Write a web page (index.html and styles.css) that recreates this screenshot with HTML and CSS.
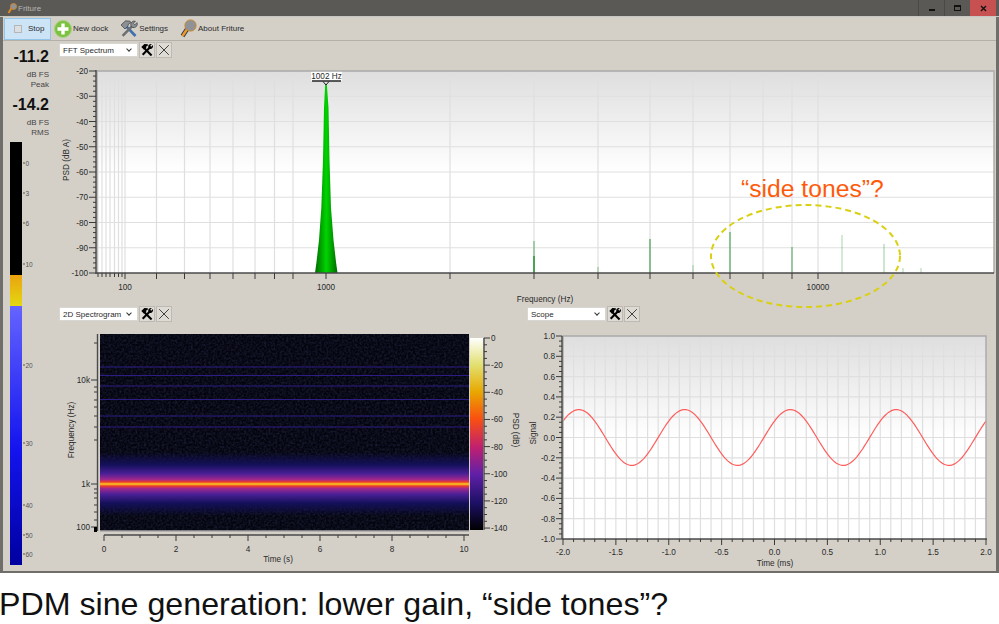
FILE: index.html
```html
<!DOCTYPE html>
<html lang="en">
<head>
    <meta charset="UTF-8">
    <title>Friture</title>
    <link rel="stylesheet" href="styles.css">
</head>
<body>
    <svg class="defs" width="0" height="0">
        <defs>
            <linearGradient id="plotShade" x1="0" y1="0" x2="0" y2="1">
                <stop offset="0" stop-color="#dedede"/>
                <stop offset="0.5" stop-color="#ffffff"/>
            </linearGradient>
            <linearGradient id="peakGreen" x1="0" y1="0" x2="1" y2="0">
                <stop offset="0" stop-color="#006a00"/>
                <stop offset="0.5" stop-color="#00d400"/>
                <stop offset="1" stop-color="#006a00"/>
            </linearGradient>
            <linearGradient id="meterAmber" x1="0" y1="0" x2="0" y2="1">
                <stop offset="0" stop-color="#eba310"/>
                <stop offset="1" stop-color="#e3d810"/>
            </linearGradient>
            <linearGradient id="meterBlue" x1="0" y1="0" x2="0" y2="1">
                <stop offset="0" stop-color="#6464ff"/>
                <stop offset="0.55" stop-color="#1414ee"/>
                <stop offset="1" stop-color="#0000a0"/>
            </linearGradient>
            <linearGradient id="band" x1="0" y1="0" x2="0" y2="1">
                <stop offset="0" stop-color="#14105a" stop-opacity="0"/>
                <stop offset="0.2" stop-color="#14105a"/>
                <stop offset="0.34" stop-color="#4a2096"/>
                <stop offset="0.43" stop-color="#a0288c"/>
                <stop offset="0.47" stop-color="#f03c28"/>
                <stop offset="0.5" stop-color="#f8d020"/>
                <stop offset="0.53" stop-color="#f03c28"/>
                <stop offset="0.57" stop-color="#a0288c"/>
                <stop offset="0.66" stop-color="#4a2096"/>
                <stop offset="0.8" stop-color="#14105a"/>
                <stop offset="1" stop-color="#14105a" stop-opacity="0"/>
            </linearGradient>
            <linearGradient id="colorScale" x1="0" y1="0" x2="0" y2="1">
                <stop offset="0" stop-color="#ffffff"/>
                <stop offset="0.14" stop-color="#e2e070"/>
                <stop offset="0.28" stop-color="#e8a800"/>
                <stop offset="0.42" stop-color="#fa5010"/>
                <stop offset="0.57" stop-color="#c02070"/>
                <stop offset="0.71" stop-color="#6020a8"/>
                <stop offset="0.86" stop-color="#1c1064"/>
                <stop offset="1" stop-color="#000000"/>
            </linearGradient>
            <filter id="speckle" x="0" y="0" width="100%" height="100%">
                <feTurbulence type="fractalNoise" baseFrequency="0.45" numOctaves="2" seed="4"/>
                <feColorMatrix type="matrix" values="0 0 0 0 0.04  0 0 0 0 0.06  0 0 0 0 0.16  0.7 0 0 0 -0.24"/>
            </filter>
            <symbol id="tools" viewBox="0 0 16 16">
                <path d="M4.5 5.5 13.2 14.2" class="tool-stem"/>
                <path d="M1.5 4.5 5 1.2 8.6 1.4 9.6 2.6 7.4 3.6 7.2 5.2 4.6 7.6Z" class="tool-head"/>
                <path d="M11.2 5.2 3 13.4" class="tool-stem"/>
                <path d="M14.8 2.4 12.9 4.3 11.7 3.1 13.5 1.2A3.2 3.2 0 0 0 9.6 5.4L11 6.6A3.2 3.2 0 0 0 14.8 2.4Z" class="tool-head"/>
            </symbol>
            <symbol id="cross" viewBox="0 0 16 16">
                <path d="M2.5 2.5 13.5 13.5M13.5 2.5 2.5 13.5" class="cross-line"/>
            </symbol>
        </defs>
    </svg>

    <div class="window">
        <div class="titlebar">
            <svg class="title-icon" width="10" height="11" viewBox="0 0 10 11">
                <path d="M1.5 10 4.5 5" class="about-handle"/>
                <circle cx="6.5" cy="3.5" r="3" class="about-ball"/>
            </svg>
            <span class="title-text">Friture</span>
            <div class="window-buttons">
                <div class="win-btn"><span class="win-min"></span></div>
                <div class="win-btn"><span class="win-max"></span></div>
                <div class="win-btn win-close">
                    <svg width="7" height="7" viewBox="0 0 7 7"><path d="M1 1 6 6M6 1 1 6" class="win-x"/></svg>
                </div>
            </div>
        </div>

        <div class="toolbar">
            <div class="tool tool-stop"><span class="check"></span>Stop</div>
            <div class="tool tool-dock">
                <svg width="18" height="18" viewBox="0 0 18 18">
                    <circle cx="9" cy="9" r="8.5" class="plus-disc"/>
                    <path d="M9 3.5V14.5M3.5 9H14.5" class="plus-mark"/>
                </svg>
                New dock
            </div>
            <div class="tool">
                <svg width="18" height="18" viewBox="0 0 18 18">
                    <path d="M5 5 15.5 16" class="settings-blue"/>
                    <path d="M1 5 5.5 .8 10 1.2 11 2.6 8.4 4 8 6 5 9Z" class="settings-steel"/>
                    <path d="M12.4 5.8 2.6 15.8" class="settings-stem"/>
                    <path d="M17 2.6 14.8 4.8 13.4 3.4 15.4 1.2A3.6 3.6 0 0 0 11 6L12.4 7.4A3.6 3.6 0 0 0 17 2.6Z" class="settings-steel"/>
                </svg>
                Settings
            </div>
            <div class="tool">
                <svg width="17" height="19" viewBox="0 0 17 19">
                    <path d="M2.5 17 7.5 9.5" class="about-outline"/>
                    <path d="M2.5 17 7.5 9.5" class="about-handle-big"/>
                    <circle cx="10.5" cy="6.5" r="5.6" class="about-ball"/>
                </svg>
                About Friture
            </div>
        </div>

        <div class="main">
            <div class="levels">
                <div class="level-value">-11.2</div>
                <div class="level-unit">dB FS<br>Peak</div>
                <div class="level-value level-second">-14.2</div>
                <div class="level-unit">dB FS<br>RMS</div>
                <svg id="meter" class="meter" width="53" height="426" viewBox="3 140 53 426"></svg>
            </div>

            <div class="docks">
                <div class="dock">
                    <div class="dock-head">
                        <div class="combo">FFT Spectrum<span class="chevron"></span></div>
                        <div class="icon-btn"><svg width="14" height="14"><use href="#tools"/></svg></div>
                        <div class="icon-btn"><svg width="14" height="14"><use href="#cross"/></svg></div>
                    </div>
                    <svg id="spectrum" class="plot" width="940" height="247" viewBox="56 58 940 247"></svg>
                </div>

                <div class="dock-row">
                    <div class="dock dock-left">
                        <div class="dock-head">
                            <div class="combo">2D Spectrogram<span class="chevron"></span></div>
                            <div class="icon-btn"><svg width="14" height="14"><use href="#tools"/></svg></div>
                            <div class="icon-btn"><svg width="14" height="14"><use href="#cross"/></svg></div>
                        </div>
                        <svg id="spectrogram" class="plot" width="468" height="249" viewBox="56 322 468 249"></svg>
                    </div>
                    <div class="dock dock-right">
                        <div class="dock-head">
                            <div class="combo">Scope<span class="chevron"></span></div>
                            <div class="icon-btn"><svg width="14" height="14"><use href="#tools"/></svg></div>
                            <div class="icon-btn"><svg width="14" height="14"><use href="#cross"/></svg></div>
                        </div>
                        <svg id="scope" class="plot" width="472" height="249" viewBox="524 322 472 249"></svg>
                    </div>
                </div>
            </div>
        </div>
    </div>

    <p class="caption">PDM sine generation: lower gain, “side tones”?</p>

    <div class="note-text">“side tones”?</div>
    <svg class="note-ring" width="200" height="112" viewBox="705 200 200 112">
        <ellipse cx="805.5" cy="256" rx="94.5" ry="51"/>
    </svg>

    <script src="plots.js"></script>
</body>
</html>
```

FILE: styles.css
```css
* {
    box-sizing: border-box;
}
body {
    margin: 0;
    width: 999px;
    height: 624px;
    overflow: hidden;
    position: relative;
    background-color: #ffffff;
    font-family: "Liberation Sans", sans-serif;
    font-size: 8px;
    color: #2a2a2a;
}
.defs {
    position: absolute;
}
.window {
    height: 573px;
    display: flex;
    flex-direction: column;
    background-color: #d4d0c8;
    border-left: 3px solid #6f6e6b;
    border-right: 3px solid #6f6e6b;
    border-bottom: 2px solid #6f6e6b;
}

/* title bar */
.titlebar {
    height: 17px;
    margin: 0 -3px;
    padding-left: 7px;
    display: flex;
    align-items: flex-start;
    background-color: #5a5956;
    border-bottom: 1px solid #c9c7c1;
}
.title-icon {
    margin-top: 3px;
}
.title-text {
    margin-left: 1px;
    padding-top: 4px;
    color: #b8b6b2;
}
.window-buttons {
    margin-left: auto;
    margin-right: 3px;
    display: flex;
}
.win-btn {
    width: 26px;
    height: 16px;
    display: flex;
    align-items: center;
    justify-content: center;
    border-left: 1px solid #4a4947;
}
.win-close {
    background-color: #c75050;
    border-left: none;
}
.win-min {
    width: 6px;
    height: 2px;
    margin-top: 3px;
    background-color: #111111;
}
.win-max {
    width: 7px;
    height: 6px;
    border: 1px solid #111111;
    border-top-width: 2px;
}
.win-x {
    stroke: #111111;
    stroke-width: 1.4;
    fill: none;
}

/* toolbar */
.toolbar {
    height: 24px;
    padding: 1px 0 1px 1px;
    display: flex;
    align-items: center;
    border-bottom: 1px solid #b3b0a9;
}
.tool {
    height: 22px;
    display: flex;
    align-items: center;
    gap: 1px;
    margin-left: 12px;
    white-space: nowrap;
}
.tool-stop {
    width: 47px;
    margin-left: 0;
    padding-left: 9px;
    gap: 6px;
    background-color: #cde4f7;
    border: 1px solid #92c5e8;
}
.tool-dock {
    margin-left: 3px;
}
.check {
    width: 8px;
    height: 8px;
    background-color: #dcdfe2;
    border: 1px solid #b4b6b8;
}
.plus-disc {
    fill: #7cc142;
    stroke: #a4d47c;
}
.plus-mark {
    stroke: #ffffff;
    stroke-width: 3.4;
    fill: none;
}
.settings-blue {
    stroke: #3f6fae;
    stroke-width: 2.6;
    fill: none;
}
.settings-stem {
    stroke: #6c6f72;
    stroke-width: 2.6;
    fill: none;
}
.settings-steel {
    fill: #8c9094;
    stroke: #3c3e40;
    stroke-width: 0.7;
}
.about-handle {
    stroke: #e08a20;
    stroke-width: 2;
    fill: none;
}
.about-handle-big {
    stroke: #ef9a26;
    stroke-width: 2.6;
    fill: none;
}
.about-outline {
    stroke: #22364e;
    stroke-width: 4.4;
    fill: none;
}
.about-ball {
    fill: #8f9397;
    stroke: #c9862c;
    stroke-width: 1;
}

/* main area */
.main {
    flex: 1;
    display: flex;
    min-height: 0;
}
.levels {
    width: 53px;
    flex-shrink: 0;
    padding-top: 7px;
}
.level-value {
    padding-right: 7px;
    text-align: right;
    font-weight: bold;
    font-size: 16px;
    line-height: 18px;
    color: #111111;
}
.level-second {
    margin-top: 6px;
}
.level-unit {
    margin-top: 4px;
    padding-right: 7px;
    text-align: right;
    line-height: 10px;
    color: #444444;
}
.meter {
    display: block;
    margin-top: 3px;
}
.docks {
    flex: 1;
    min-width: 0;
}
.dock-row {
    display: flex;
}
.dock-head {
    height: 17px;
    padding: 1px 0 0 3px;
    display: flex;
    align-items: flex-start;
    gap: 1px;
}
.dock-left {
    width: 468px;
}
.dock-right {
    width: 472px;
}
.combo {
    width: 79px;
    height: 14px;
    margin-top: 1px;
    padding-left: 3px;
    display: flex;
    align-items: center;
    background-color: #ffffff;
    border: 1px solid #d8d6d0;
    white-space: nowrap;
    position: relative;
}
.chevron {
    position: absolute;
    right: 6px;
    top: 3px;
    width: 4px;
    height: 4px;
    border-right: 1px solid #333333;
    border-bottom: 1px solid #333333;
    transform: rotate(45deg);
}
.icon-btn {
    width: 16px;
    height: 16px;
    display: flex;
    align-items: center;
    justify-content: center;
    background-color: #dedbd5;
    border: 1px solid #bdbab3;
}
.tool-stem {
    stroke: #000000;
    stroke-width: 2.4;
    fill: none;
}
.tool-head {
    fill: #000000;
}
.cross-line {
    stroke: #3a3a3a;
    stroke-width: 1.1;
    fill: none;
}
.plot {
    display: block;
}

/* plot parts, drawn by plots.js */
.grid {
    stroke: #dfdfdf;
    stroke-width: 1.2;
}
.axis {
    stroke: #4a4a4a;
    stroke-width: 1.4;
}
.tick {
    stroke: #3a3a3a;
    stroke-width: 1;
}
.frame {
    fill: none;
    stroke: #a9a9a9;
    stroke-width: 1.4;
}
.label {
    font-family: "Liberation Sans", sans-serif;
    font-size: 8.2px;
    fill: #2a2a2a;
}
.meter-label {
    font-family: "Liberation Sans", sans-serif;
    font-size: 6.5px;
    fill: #555555;
}
.meter-tick {
    stroke: #555555;
    stroke-width: 1;
}
.sine {
    fill: none;
    stroke: #ff5c5c;
    stroke-width: 1.2;
}
.peak-line {
    stroke: #333333;
    stroke-width: 1.6;
}
.peak-bg {
    fill: #ffffff;
}
.peak-caret {
    fill: none;
    stroke: #222222;
    stroke-width: 1;
}
.tone {
    stroke: #0f8a1c;
    stroke-width: 1.2;
}
.hum-line {
    stroke: #2c1c84;
    stroke-width: 1.2;
}

/* text under the window */
.caption {
    margin: 13px 0 0 -1px;
    font-family: "Liberation Sans", sans-serif;
    font-size: 32.2px;
    line-height: 36px;
    color: #111111;
    white-space: nowrap;
}

/* annotation lying over the spectrum */
.note-text {
    position: absolute;
    left: 741px;
    top: 175px;
    font-family: "Liberation Sans", sans-serif;
    font-size: 24.7px;
    line-height: 28px;
    color: #ff5a0a;
    white-space: nowrap;
}
.note-ring {
    position: absolute;
    left: 705px;
    top: 200px;
}
.note-ring ellipse {
    fill: none;
    stroke: #d9d012;
    stroke-width: 2;
    stroke-dasharray: 6 4;
}
```

FILE: plots.js
```js
const SVG_NS = "http://www.w3.org/2000/svg";

function add(svg, tag, attrs, text) {
    const el = document.createElementNS(SVG_NS, tag);
    for (const k in attrs) {
        el.setAttribute(k, attrs[k]);
    }
    if (text !== undefined) {
        el.textContent = text;
    }
    svg.appendChild(el);
    return el;
}

function line(svg, x1, y1, x2, y2, cls) {
    return add(svg, "line", { x1: x1, y1: y1, x2: x2, y2: y2, class: cls });
}

function label(svg, x, y, anchor, text) {
    return add(svg, "text", { x: x, y: y, "text-anchor": anchor, class: "label" }, text);
}

function sideways(svg, x, y, angle, text) {
    return add(svg, "text", {
        transform: "translate(" + x + " " + y + ") rotate(" + angle + ")",
        "text-anchor": "middle",
        class: "label"
    }, text);
}

function drawMeter() {
    const svg = document.getElementById("meter");
    add(svg, "rect", { x: 10, y: 141, width: 12, height: 133, fill: "#000000" });
    add(svg, "rect", { x: 10, y: 274, width: 12, height: 31, fill: "url(#meterAmber)" });
    add(svg, "rect", { x: 10, y: 305, width: 12, height: 259, fill: "url(#meterBlue)" });
    const marks = [[0, 162], [3, 192], [6, 222], [10, 263], [20, 364], [30, 442], [40, 504], [50, 534], [60, 553]];
    marks.forEach(function (m) {
        line(svg, 23, m[1], 25, m[1], "meter-tick");
        add(svg, "text", { x: 25.5, y: m[1] + 2.5, class: "meter-label" }, m[0]);
    });
}

function drawSpectrum() {
    const svg = document.getElementById("spectrum");
    const left = 97, right = 994, top = 71, bottom = 273;
    const minor = [98, 102, 106, 110, 114.5, 118.5, 122];
    const major = [125, 156.5, 184.5, 210, 233, 255, 274.5, 293, 326, 450, 534, 598, 650, 693, 730, 763, 792, 818];

    add(svg, "rect", { x: left, y: top, width: right - left, height: bottom - top, fill: "url(#plotShade)" });
    minor.concat(major).forEach(function (x) {
        line(svg, x, top, x, bottom, "grid");
    });
    for (let i = 1; i < 8; i++) {
        const y = top + i * 25.25;
        line(svg, left, y, right, y, "grid");
    }

    // tones, x / top / opacity
    const tones = [[534, 241, 0.55], [534, 256, 1], [598, 267, 0.4], [650, 239, 0.75], [693, 265, 0.3],
        [730, 232, 0.7], [792, 247, 0.6], [842, 235, 0.3], [884, 244, 0.35], [903, 268, 0.3], [921, 268, 0.3]];
    tones.forEach(function (t) {
        add(svg, "line", { x1: t[0], y1: t[1], x2: t[0], y2: bottom, class: "tone", "stroke-opacity": t[2] });
    });

    add(svg, "path", {
        d: "M315 273 L316.5 262 L319 240 L321.3 208 L323 160 L324 108 L325.2 84 L326.8 84 L328.5 108 L329.5 160 L331 208 L333.5 240 L336 262 L337.5 273 Z",
        fill: "url(#peakGreen)"
    });
    add(svg, "rect", { x: 311, y: 71, width: 31, height: 10, class: "peak-bg" });
    label(svg, 326.5, 79, "middle", "1002 Hz");
    line(svg, 312, 81, 341, 81, "peak-line");
    add(svg, "path", { d: "M323 81.5 326 85 329 81.5", class: "peak-caret" });

    add(svg, "path", { d: "M" + left + " " + bottom + "V" + top + "H" + right + "V" + bottom, class: "frame" });
    line(svg, left - 1, top - 1, left - 1, bottom + 1, "axis");
    line(svg, left - 1, bottom, right, bottom, "axis");

    for (let i = 0; i <= 8; i++) {
        const y = top + i * 25.25;
        line(svg, 89, y, 96, y, "tick");
        label(svg, 88, y + 3, "end", String(-20 - i * 10));
        if (i < 8) {
            for (let j = 1; j < 5; j++) {
                line(svg, 93, y + j * 5.05, 96, y + j * 5.05, "tick");
            }
        }
    }
    minor.forEach(function (x) {
        line(svg, x, bottom, x, bottom + 4, "tick");
    });
    major.forEach(function (x) {
        line(svg, x, bottom, x, bottom + 6, "tick");
    });
    label(svg, 125, 290, "middle", "100");
    label(svg, 326, 290, "middle", "1000");
    label(svg, 818, 290, "middle", "10000");
    label(svg, 545, 302, "middle", "Frequency (Hz)");
    sideways(svg, 69, 160, -90, "PSD (dB A)");
}

function drawSpectrogram() {
    const svg = document.getElementById("spectrogram");
    const left = 100, right = 469, top = 334, bottom = 531;

    add(svg, "rect", { x: left, y: top, width: right - left, height: bottom - top, fill: "#04040e" });
    add(svg, "rect", { x: left, y: top, width: right - left, height: bottom - top, filter: "url(#speckle)" });
    [367, 375.5, 386, 399.5, 416, 427].forEach(function (y) {
        line(svg, left, y, right, y, "hum-line");
    });
    add(svg, "rect", { x: left, y: 452, width: right - left, height: 64, fill: "url(#band)" });

    line(svg, 97.5, top, 97.5, bottom, "axis");
    line(svg, left, bottom, right, bottom, "frame");
    [[380, "10k"], [484, "1k"], [527, "100"]].forEach(function (m) {
        line(svg, 91, m[0], 97, m[0], "tick");
        label(svg, 90, m[0] + 3, "end", m[1]);
    });
    [343, 387, 392, 400, 407, 416, 427, 440, 489, 493, 498, 505, 512, 520].forEach(function (y) {
        line(svg, 94, y, 97, y, "tick");
    });
    add(svg, "rect", { x: 94, y: 527, width: 3, height: 5, fill: "#000000" });

    line(svg, 104, 535, 469, 535, "axis");
    for (let i = 0; i <= 20; i++) {
        const x = 104 + i * 18;
        line(svg, x, 535, x, i % 4 === 0 ? 541 : 538, "tick");
        if (i % 4 === 0) {
            label(svg, x, 552, "middle", String(i / 2));
        }
    }
    label(svg, 278, 562, "middle", "Time (s)");
    sideways(svg, 74, 430, -90, "Frequency (Hz)");

    add(svg, "rect", { x: 470, y: 338, width: 13, height: 192, fill: "url(#colorScale)" });
    line(svg, 484, 338, 484, 530, "axis");
    for (let i = 0; i <= 7; i++) {
        const y = 338 + i * 27.15;
        line(svg, 484, y, 490, y, "tick");
        label(svg, 491, y + 3, "start", String(-i * 20));
        if (i < 7) {
            for (let j = 1; j < 4; j++) {
                line(svg, 484, y + j * 6.8, 487, y + j * 6.8, "tick");
            }
        }
    }
    sideways(svg, 513, 430, 90, "PSD (dB)");
}

function drawScope() {
    const svg = document.getElementById("scope");
    const left = 563, right = 986, top = 336, bottom = 539;
    const perMs = (right - left) / 4;

    add(svg, "rect", { x: left, y: top, width: right - left, height: bottom - top, fill: "url(#plotShade)" });
    for (let i = 1; i < 40; i++) {
        const x = left + i * (right - left) / 40;
        line(svg, x, top, x, bottom, "grid");
    }
    for (let i = 1; i < 10; i++) {
        const y = top + i * (bottom - top) / 10;
        line(svg, left, y, right, y, "grid");
    }

    let d = "";
    for (let x = left; x <= right; x += 1.5) {
        const t = (x - left) / perMs - 2;
        const v = 0.275 * Math.cos(2 * Math.PI * (t - 0.15));
        const y = (top + bottom) / 2 - v * (bottom - top) / 2;
        d += (d ? "L" : "M") + x.toFixed(1) + " " + y.toFixed(1);
    }
    add(svg, "path", { d: d, class: "sine" });

    add(svg, "path", { d: "M" + left + " " + bottom + "V" + top + "H" + right + "V" + bottom, class: "frame" });
    line(svg, left - 1, top, left - 1, bottom, "axis");
    line(svg, left - 1, bottom, right + 1, bottom, "axis");

    for (let i = 0; i <= 10; i++) {
        const y = top + i * (bottom - top) / 10;
        line(svg, 556, y, 562, y, "tick");
        label(svg, 555, y + 3, "end", (1 - i / 5).toFixed(1));
        if (i < 10) {
            for (let j = 1; j < 4; j++) {
                line(svg, 559, y + j * 5.07, 562, y + j * 5.07, "tick");
            }
        }
    }
    for (let i = 0; i <= 40; i++) {
        const x = left + i * (right - left) / 40;
        line(svg, x, bottom, x, i % 5 === 0 ? bottom + 6 : bottom + 3, "tick");
        if (i % 5 === 0) {
            label(svg, x, 555, "middle", (-2 + i / 10).toFixed(1));
        }
    }
    label(svg, 775, 566, "middle", "Time (ms)");
    sideways(svg, 536, 433, -90, "Signal");
}

drawMeter();
drawSpectrum();
drawSpectrogram();
drawScope();
```
